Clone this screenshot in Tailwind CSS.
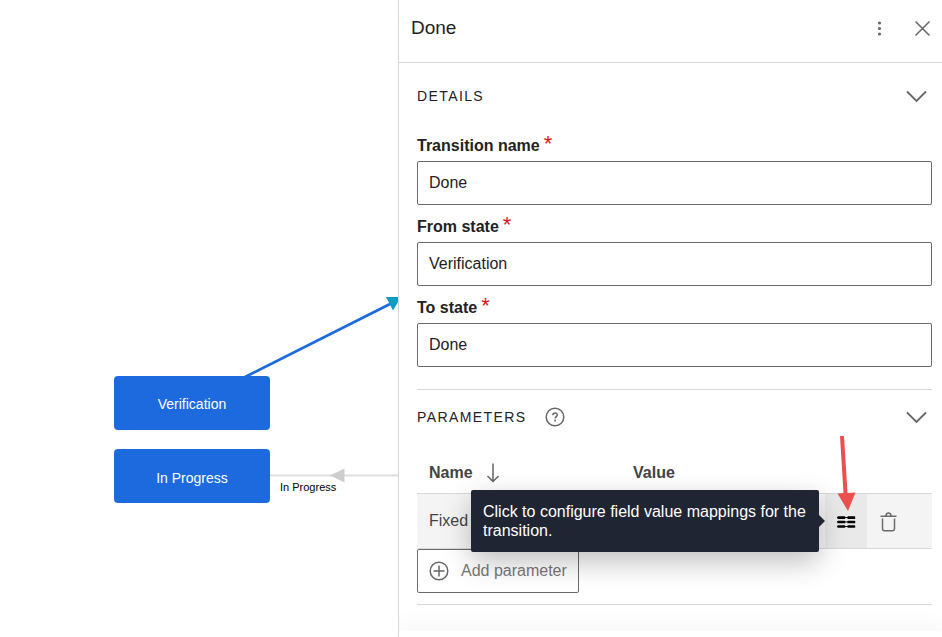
<!DOCTYPE html>
<html lang="en">
<head>
    <meta charset="UTF-8">
    <meta name="viewport" content="width=device-width, initial-scale=1.0">
    <title>Workflow editor</title>
    <script src="https://cdn.jsdelivr.net/npm/@tailwindcss/browser@4"></script>
</head>
<body class="flex h-screen overflow-hidden bg-white font-['Liberation_Sans',Arial,sans-serif] text-base text-[#222]">

    <!-- Workflow diagram -->
    <main class="relative min-w-0 flex-1 overflow-hidden">
        <svg class="absolute top-0 left-0" width="420" height="637" fill="none">
            <path d="M243 378 392 303" stroke="#1c6add" stroke-width="2.6"/>
            <path d="M386 297h15l-8 13.500z" fill="#0d9bbf"/>
            <path d="M270 475.500h150" stroke="#dedede" stroke-width="2"/>
            <path d="M330 475.500l14.500-7v14z" fill="#cdcdcd"/>
        </svg>
        <div class="absolute top-[376px] left-[114px] flex h-[54px] w-[156px] items-center justify-center rounded bg-[#1c6add] pt-0.5 text-sm text-white">Verification</div>
        <div class="absolute top-[449px] left-[114px] flex h-[54px] w-[156px] items-center justify-center rounded bg-[#1c6add] pt-1 text-sm text-white">In Progress</div>
        <span class="absolute top-[479px] left-[280px] text-[11px] leading-4 text-black">In Progress</span>
    </main>

    <!-- Transition panel -->
    <aside class="flex w-[544px] shrink-0 flex-col overflow-hidden border-l border-[#d8d8d8] bg-white">
        <header class="flex items-center justify-between border-b border-[#d8d8d8] pt-4 pr-2 pb-[22px] pl-3">
            <h1 class="text-[19px] leading-6">Done</h1>
            <div class="flex items-center gap-5 text-[#666]">
                <button type="button" aria-label="More actions" class="flex size-6 items-center justify-center">
                    <svg width="24" height="24" fill="currentColor"><circle cx="13.500" cy="7" r="1.600"/><circle cx="13.500" cy="12.500" r="1.600"/><circle cx="13.500" cy="18" r="1.600"/></svg>
                </button>
                <button type="button" aria-label="Close" class="flex size-6 items-center justify-center">
                    <svg width="24" height="24" fill="none" stroke="currentColor" stroke-width="1.500"><path d="M5.500 5.500l14 14M19.500 5.500l-14 14"/></svg>
                </button>
            </div>
        </header>

        <div class="min-h-0 flex-1 overflow-hidden pr-[10px] pl-[18px]">
            <!-- Details -->
            <section class="border-b border-[#d8d8d8] pb-[22px]">
                <h2>
                    <button type="button" aria-expanded="true" class="flex w-full items-center justify-between py-[22px] pr-1">
                        <span class="text-sm tracking-[1.4px]">DETAILS</span>
                        <svg width="22" height="22" fill="none" stroke="#666" stroke-width="1.800"><path d="M1 6.500l9.500 9.500 9.500-9.500"/></svg>
                    </button>
                </h2>
                <form class="flex flex-col gap-3 pt-[7px]">
                    <div class="flex flex-col gap-[5px]">
                        <label for="transitionName" class="flex gap-1 leading-5 font-bold">Transition name <span class="text-[22px] leading-4 font-normal text-[#d8181c]">*</span></label>
                        <input id="transitionName" type="text" value="Done" class="h-11 w-full rounded-xs border border-[#6b6b6b] px-[11px]">
                    </div>
                    <div class="flex flex-col gap-[5px]">
                        <label for="fromState" class="flex gap-1 leading-5 font-bold">From state <span class="text-[22px] leading-4 font-normal text-[#d8181c]">*</span></label>
                        <input id="fromState" type="text" value="Verification" class="h-11 w-full rounded-xs border border-[#6b6b6b] px-[11px]">
                    </div>
                    <div class="flex flex-col gap-[5px]">
                        <label for="toState" class="flex gap-1 leading-5 font-bold">To state <span class="text-[22px] leading-4 font-normal text-[#d8181c]">*</span></label>
                        <input id="toState" type="text" value="Done" class="h-11 w-full rounded-xs border border-[#6b6b6b] px-[11px]">
                    </div>
                </form>
            </section>

            <!-- Parameters -->
            <section class="border-b border-[#d8d8d8] pb-[11px]">
                <div class="flex items-center py-4 pr-1">
                    <h2 class="text-sm tracking-[1.4px]">PARAMETERS</h2>
                    <button type="button" aria-label="Help" class="ml-[18px]">
                        <svg width="22" height="22" fill="none" stroke="#666" stroke-width="1.500"><circle cx="11" cy="11" r="8.800"/><path d="M8.900 9.200c0-2.900 4.400-2.900 4.400-.2 0 1.600-2.200 1.600-2.200 3.600" stroke-width="1.500"/><path d="M11.100 13.800v1.700" stroke-width="1.700"/></svg>
                    </button>
                    <button type="button" aria-label="Collapse parameters" aria-expanded="true" class="ml-auto">
                        <svg width="22" height="22" fill="none" stroke="#666" stroke-width="1.800"><path d="M1 6.500l9.500 9.500 9.500-9.500"/></svg>
                    </button>
                </div>
                <table class="w-full table-fixed border-separate border-spacing-0 text-left text-[#444]">
                    <thead>
                        <tr class="h-[49px]">
                            <th class="px-3 pt-2">
                                <button type="button" class="flex items-center gap-[10px] font-bold">Name
                                    <svg width="20" height="22" fill="none" stroke="#666" stroke-width="1.500"><path d="M10 1.500v18M4.500 14l5.500 5.500 5.500-5.500"/></svg>
                                </button>
                            </th>
                            <th class="px-3 pt-2">Value</th>
                            <th class="w-[107px]" aria-label="Actions"></th>
                        </tr>
                    </thead>
                    <tbody>
                        <tr class="bg-[#f4f4f4]">
                            <td class="border-y border-[#d8d8d8] px-3">Fixed</td>
                            <td class="border-y border-[#d8d8d8] px-3"></td>
                            <td class="border-y border-[#d8d8d8]">
                                <div class="flex">
                                    <button type="button" aria-label="Configure mappings" aria-describedby="mappingTip" class="relative flex h-[54px] w-[42px] items-center justify-center bg-[#e9e9e9]">
                                        <svg width="20" height="14" fill="#000"><path d="M1 3.500h18M1 8h18M1 12.500h18" stroke="#000" stroke-width=".9"/><rect x="1.500" y="2.300" width="7.700" height="2.600" rx=".5"/><rect x="11.500" y="2.300" width="7.700" height="2.600" rx=".5"/><rect x="1.500" y="6.700" width="7.700" height="2.600" rx=".5"/><rect x="11.500" y="6.700" width="7.700" height="2.600" rx=".5"/><rect x="1.500" y="11.200" width="7.700" height="2.600" rx=".5"/><rect x="11.500" y="11.200" width="7.700" height="2.600" rx=".5"/></svg>
                                        <!-- Tooltip -->
                                        <span id="mappingTip" role="tooltip" class="absolute right-full mr-[6px] w-[348px] rounded-xs bg-[#202533] p-3 text-left leading-[19px] text-white shadow-[0_10px_28px_rgba(0,0,0,0.25)]">
                                            Click to configure field value mappings for the transition.
                                            <svg class="absolute top-[25px] left-full" width="6" height="12" fill="#202533"><path d="M0 0l6 6-6 6z"/></svg>
                                        </span>
                                        <svg class="absolute bottom-[37px] left-3" width="20" height="76" fill="#ea5050"><path d="M3 1l4 0 3.500 57 8-.5L11 76 .5 58.500l6-.4z"/></svg>
                                    </button>
                                    <button type="button" aria-label="Delete parameter" class="flex h-[54px] w-[42px] items-center justify-center">
                                        <svg width="20" height="22" fill="none" stroke="#6b6b6b" stroke-width="1.500"><path d="M2.500 6.300h16M8 6c0-4 5-4 5 0M4.500 8.500v10c0 1.500.7 2.300 2.200 2.300h7.600c1.500 0 2.200-.8 2.200-2.300v-10"/></svg>
                                    </button>
                                </div>
                            </td>
                        </tr>
                    </tbody>
                </table>
                <button type="button" class="flex h-11 items-center gap-3 rounded-xs border border-[#6b6b6b] px-[11px] text-[#777]">
                    <svg width="20" height="20" fill="none" stroke="#666" stroke-width="1.500"><circle cx="10" cy="10" r="8.800"/><path d="M10 4.500v11M4.500 10h11"/></svg>
                    Add parameter
                </button>
            </section>
        </div>
        <footer class="relative h-[6px] bg-white shadow-[0_0_24px_rgba(0,0,0,0.12)]"></footer>
    </aside>

</body>
</html>
